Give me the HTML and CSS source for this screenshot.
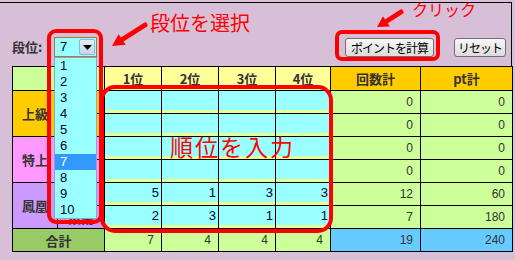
FILE: index.html
```html
<!DOCTYPE html>
<html lang="ja">
<head>
<meta charset="utf-8">
<title>段位ポイント計算</title>
<link rel="stylesheet" href="styles.css">
</head>
<body>
<div class="panel">
  <div class="controls">
    <div class="rank">
      <span class="rank-label">段位:</span>
      <div class="select">
        <span class="select-value">7</span>
        <span class="select-btn"><svg width="9" height="5" viewBox="0 0 9 5"><polygon points="0,0 9,0 4.5,5" fill="#000"/></svg></span>
        <ul class="dropdown">
          <li>1</li><li>2</li><li>3</li><li>4</li><li>5</li>
          <li>6</li><li class="active">7</li><li>8</li><li>9</li><li>10</li>
        </ul>
      </div>
    </div>
    <div class="buttons">
      <button class="btn btn-calc">ポイントを計算</button>
      <button class="btn btn-reset">リセット</button>
    </div>
  </div>
  <table class="grid">
    <colgroup>
      <col class="c-room"><col class="c-type"><col class="c-pos"><col class="c-pos"><col class="c-pos"><col class="c-pos4"><col class="c-count"><col class="c-pt">
    </colgroup>
    <tr class="head">
      <th colspan="2" class="h-blank"></th>
      <th class="h-pos">1位</th><th class="h-pos">2位</th><th class="h-pos">3位</th><th class="h-pos">4位</th>
      <th class="h-sum">回数計</th><th class="h-sum">pt計</th>
    </tr>
    <tr>
      <th rowspan="2" class="room room-jo">上級</th><th class="type room-jo">東風</th>
      <td class="in"><input value=""></td><td class="in"><input value=""></td><td class="in"><input value=""></td><td class="in"><input value=""></td>
      <td class="num">0</td><td class="num">0</td>
    </tr>
    <tr>
      <th class="type room-jo">東南</th>
      <td class="in"><input value=""></td><td class="in"><input value=""></td><td class="in"><input value=""></td><td class="in"><input value=""></td>
      <td class="num">0</td><td class="num">0</td>
    </tr>
    <tr>
      <th rowspan="2" class="room room-toku">特上</th><th class="type room-toku">東風</th>
      <td class="in"><input value=""></td><td class="in"><input value=""></td><td class="in"><input value=""></td><td class="in"><input value=""></td>
      <td class="num">0</td><td class="num">0</td>
    </tr>
    <tr>
      <th class="type room-toku">東南</th>
      <td class="in"><input value=""></td><td class="in"><input value=""></td><td class="in"><input value=""></td><td class="in"><input value=""></td>
      <td class="num">0</td><td class="num">0</td>
    </tr>
    <tr>
      <th rowspan="2" class="room room-ho">鳳凰</th><th class="type room-ho">東風</th>
      <td class="in"><input value="5"></td><td class="in"><input value="1"></td><td class="in"><input value="3"></td><td class="in"><input value="3"></td>
      <td class="num">12</td><td class="num">60</td>
    </tr>
    <tr>
      <th class="type room-ho">東南</th>
      <td class="in"><input value="2"></td><td class="in"><input value="3"></td><td class="in"><input value="1"></td><td class="in"><input value="1"></td>
      <td class="num">7</td><td class="num">180</td>
    </tr>
    <tr class="total">
      <th colspan="2" class="t-label">合計</th>
      <td class="num">7</td><td class="num">4</td><td class="num">4</td><td class="num">4</td>
      <td class="num grand">19</td><td class="num grand">240</td>
    </tr>
  </table>
</div>

<div class="mark mark-select"></div>
<div class="mark mark-input"></div>
<div class="mark mark-calc"></div>
<div class="note note-select">段位を選択</div>
<div class="note note-input">順位を入力</div>
<div class="note note-click">クリック</div>
<svg class="arrows" width="515" height="260" viewBox="0 0 515 260">
  <line x1="145" y1="25" x2="123" y2="39" stroke="#ff0000" stroke-width="5" stroke-linecap="round"/>
  <polygon points="112,46 125.8,44.8 118.6,34.2" fill="#ff0000"/>
  <line x1="401" y1="12" x2="387" y2="21" stroke="#ff0000" stroke-width="5" stroke-linecap="round"/>
  <polygon points="377,27 389.8,26.5 383,16.2" fill="#ff0000"/>
</svg>
</body>
</html>
```

FILE: styles.css
```css
html, body {
  margin: 0;
  padding: 0;
}
body {
  width: 515px;
  height: 260px;
  overflow: hidden;
  background: #d8bfd8;
  font-family: "Noto Sans CJK JP", "Noto Sans", sans-serif;
  color: #333;
  position: relative;
}
.panel {
  margin-top: 2px;
  width: 511px;
  border-top: 1px solid #000;
  border-right: 1px solid #000;
  padding-top: 34px;
}
.controls {
  display: flex;
  justify-content: space-between;
  align-items: flex-start;
  height: 20px;
  padding-left: 12px;
  padding-right: 5px;
  margin-bottom: 9px;
}
.rank {
  display: flex;
  align-items: center;
  height: 20px;
}
.rank-label {
  width: 42px;
  font-size: 13px;
  font-weight: bold;
  color: #333;
  line-height: 20px;
}
.select {
  position: relative;
  box-sizing: border-box;
  width: 43px;
  height: 20px;
  border: 1px solid #a87a3c;
  background: #99ffff;
  display: flex;
}
.select-value {
  flex: 1;
  font-family: "Liberation Sans", sans-serif;
  font-size: 13px;
  line-height: 18px;
  padding-left: 5px;
  color: #000033;
}
.select-btn {
  box-sizing: border-box;
  width: 16px;
  height: 16px;
  margin: 1px 1px 0 0;
  border: 1px solid #9bb2c8;
  border-radius: 2px;
  background: linear-gradient(#e4eef8, #c3d7ec);
  display: flex;
  align-items: center;
  justify-content: center;
}
.dropdown {
  position: absolute;
  left: -1px;
  top: 19px;
  box-sizing: border-box;
  width: 43px;
  margin: 0;
  padding: 0;
  list-style: none;
  background: #99ffff;
  border: 1px solid #8fa6bd;
  z-index: 2;
}
.dropdown li {
  height: 16px;
  line-height: 16px;
  padding-left: 5px;
  font-family: "Liberation Sans", sans-serif;
  font-size: 13px;
  color: #000033;
}
.dropdown li.active {
  background: #3399ff;
  color: #fff;
}
.buttons {
  display: flex;
  gap: 20px;
  padding-top: 1px;
}
.btn {
  box-sizing: border-box;
  height: 19px;
  padding: 0;
  border: 1px solid #707070;
  border-radius: 3px;
  background: linear-gradient(#f8f8f8, #dcdcdc);
  font-family: "Noto Sans CJK JP", sans-serif;
  font-size: 12px;
  letter-spacing: -1px;
  line-height: 17px;
  color: #000;
}
.btn-calc { width: 89px; }
.btn-reset { width: 52px; }

.grid {
  border-collapse: collapse;
  table-layout: fixed;
  width: 499px;
  margin-left: 12px;
}
.c-room { width: 45px; }
.c-type { width: 47px; }
.c-pos { width: 57px; }
.c-pos4 { width: 55px; }
.c-count { width: 90px; }
.c-pt { width: 92px; }
.grid th, .grid td {
  border: 1px solid #000;
  padding: 0;
  height: 23px;
  box-sizing: border-box;
}
.grid th {
  font-size: 13px;
  font-weight: bold;
  color: #333;
  text-align: center;
}
.grid tr.head th { height: 24px; }
.h-blank { background: #ccff99; }
.h-pos { background: #ffff99; }
.h-sum { background: #ffcc00; }
.room-jo { background: #ffcc00; }
.room-toku { background: #ff99ff; }
.room-ho { background: #cc99ff; }
.type { font-size: 13px; }
.grid td.in {
  background: #e6ff99;
  vertical-align: top;
}
.grid td.in input {
  display: block;
  box-sizing: border-box;
  width: 100%;
  height: 19px;
  margin: 0;
  border: 0;
  padding: 0 2px 0 0;
  background: #99ffff;
  text-align: right;
  font-family: "Liberation Sans", sans-serif;
  font-size: 13px;
  color: #000033;
}
.grid td.num {
  background: #ccff99;
  text-align: right;
  padding-right: 7px;
  font-family: "Liberation Sans", sans-serif;
  font-size: 12px;
  color: #333;
}
.grid td.grand { background: #66ccff; }
.t-label { background: #99cc66; }

.mark {
  position: absolute;
  box-sizing: border-box;
  border: 4px solid #ff0000;
  z-index: 3;
}
.mark-select {
  left: 47px;
  top: 29px;
  width: 56px;
  height: 195px;
  border-radius: 9px;
}
.mark-input {
  left: 100px;
  top: 85px;
  width: 233px;
  height: 148px;
  border-radius: 15px;
}
.mark-calc {
  left: 335px;
  top: 30px;
  width: 105px;
  height: 31px;
  border-radius: 7px;
}
.note {
  position: absolute;
  color: #ff0000;
  font-family: "Noto Sans CJK JP", sans-serif;
  line-height: 1;
  white-space: nowrap;
  z-index: 3;
}
.note-select {
  left: 150px;
  top: 13px;
  font-size: 20px;
}
.note-input {
  left: 170px;
  top: 135px;
  font-size: 23px;
  letter-spacing: 2px;
}
.note-click {
  left: 412px;
  top: 0;
  font-size: 16px;
  line-height: 19px;
}
.arrows {
  position: absolute;
  left: 0;
  top: 0;
  z-index: 4;
  pointer-events: none;
}
```
